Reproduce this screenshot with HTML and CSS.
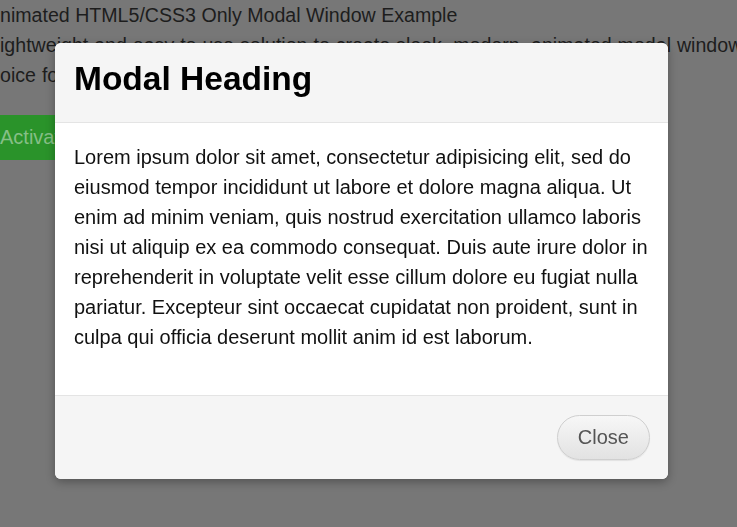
FILE: index.html
```html
<!DOCTYPE html>
<html lang="en">
<head>
  <meta charset="UTF-8" />
  <meta name="viewport" content="width=device-width, initial-scale=1.0" />
  <title>Animated HTML5/CSS3 Only Modal Window Example</title>
  <link rel="stylesheet" href="styles.css">
</head>
<body>
  <div class="page">
    <h1>nimated HTML5/CSS3 Only Modal Window Example</h1>
    <p>ightweight and easy to use solution to create sleek, modern, animated modal windows.</p>
    <p>oice for your next project.</p>
    <button class="btn-activate">Activate Modal</button>
  </div>

  <div class="overlay">
    <div class="modal">
      <div class="modal-header">
        <h2>Modal Heading</h2>
      </div>
      <div class="modal-body">
        <p>Lorem ipsum dolor sit amet, consectetur adipisicing elit, sed do eiusmod tempor incididunt ut labore et dolore magna aliqua. Ut enim ad minim veniam, quis nostrud exercitation ullamco laboris nisi ut aliquip ex ea commodo consequat. Duis aute irure dolor in reprehenderit in voluptate velit esse cillum dolore eu fugiat nulla pariatur. Excepteur sint occaecat cupidatat non proident, sunt in culpa qui officia deserunt mollit anim id est laborum.</p>
      </div>
      <div class="modal-footer">
        <button class="btn-close">Close</button>
      </div>
    </div>
  </div>
</body>
</html>
```

FILE: styles.css
```css
html, body {
  margin: 0;
  height: 100%;
  overflow: hidden;
}
body {
  font-family: 'Liberation Sans', Arial, sans-serif;
  background-color: #777;
  color: #1d1d1d;
}
.page {
  white-space: nowrap;
}
.page h1, .page p {
  font-size: 19.6px;
  font-weight: normal;
  line-height: 30px;
  margin: 0;
}
.page p {
  word-spacing: 0.5px;
}
.btn-activate {
  display: block;
  margin-top: 25px;
  font-family: inherit;
  font-size: 20px;
  color: #86bf86;
  background: #2a932a;
  border: none;
  height: 45px;
  padding: 0;
  width: 130px;
  text-align: left;
}

/* modal sits over the dimmed page */
.overlay {
  position: fixed;
  inset: 0;
}
.modal {
  position: absolute;
  left: 55px;
  top: 43px;
  width: 613px;
  background: #fff;
  border-radius: 6px;
  box-shadow: 0 3px 10px rgba(0,0,0,0.3);
  overflow: hidden;
  color: #111;
}
.modal-header {
  background: #f5f5f5;
  padding: 18px 19px 25px;
  border-bottom: 1px solid #e4e4e4;
}
.modal-header h2 {
  margin: 0;
  font-size: 33.5px;
  line-height: 36px;
  font-weight: bold;
  color: #000;
}
.modal-body {
  padding: 19px 18px 43px 19px;
}
.modal-body p {
  margin: 0;
  font-size: 20px;
  line-height: 30px;
}
.modal-footer {
  background: #f5f5f5;
  border-top: 1px solid #e4e4e4;
  padding: 19px 18px;
  text-align: right;
}
.btn-close {
  font-family: inherit;
  font-size: 20px;
  color: #555;
  height: 45px;
  padding: 0 20px;
  border: 1px solid #cfcfcf;
  border-radius: 23px;
  background: linear-gradient(#f7f7f7, #e2e2e2);
  box-shadow: 0 1px 1px rgba(0,0,0,0.08);
  cursor: pointer;
}
```
